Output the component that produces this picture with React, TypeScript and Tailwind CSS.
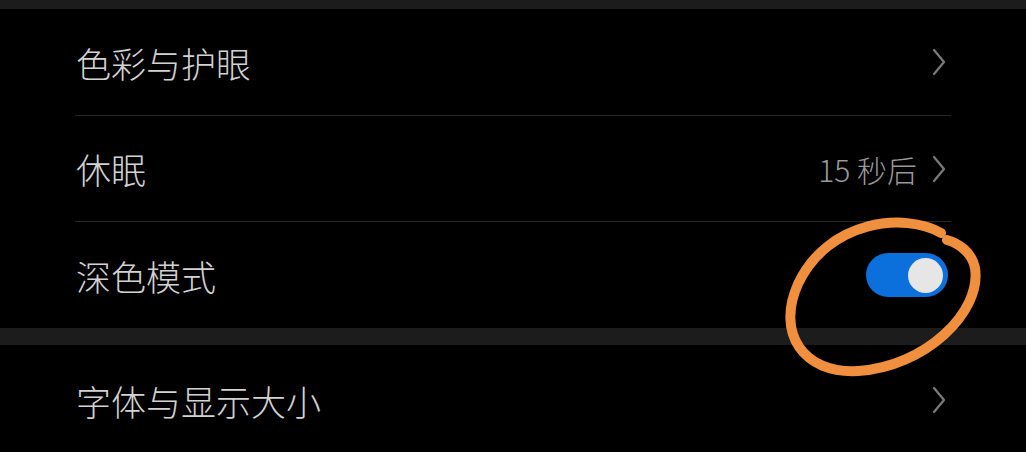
import type { ReactNode } from "react";

function Chevron() {
  return (
    <svg width="16" height="28" viewBox="0 0 16 28" className="shrink-0">
      <path d="M3 2 L13 14 L3 26" fill="none" stroke="#7a7a7a" strokeWidth="2.2" strokeLinecap="round" strokeLinejoin="round" />
    </svg>
  );
}

function Row({ label, right, divider = true, height = "h-[106px]" }: { label: string; right: ReactNode; divider?: boolean; height?: string }) {
  return (
    <div className={`mx-[75px] flex ${height} items-center justify-between ${divider ? "border-b border-[#262626]" : ""}`}>
      <span className="pl-[1px] text-[35px] font-light leading-none text-[#d2d2d2]">{label}</span>
      <div className="flex items-center gap-[14px] pr-[4px]">{right}</div>
    </div>
  );
}

export default function App() {
  return (
    <div
      className="relative h-[452px] w-[1026px] overflow-hidden bg-black"
      style={{ fontFamily: '"Noto Sans CJK SC", "Noto Sans", sans-serif' }}
    >
      <div className="h-[9px] bg-[#1c1c1c]" />
      <Row label="色彩与护眼" right={<Chevron />} height="h-[107px]" />
      <Row
        label="休眠"
        right={
          <>
            <span className="text-[30px] font-light leading-none text-[#999999]">15 秒后</span>
            <Chevron />
          </>
        }
      />
      <Row
        label="深色模式"
        divider={false}
        right={
          <div className="-mr-[1px] flex h-[44px] w-[82px] items-center justify-end rounded-full bg-[#0b6fdc] pr-[5px]">
            <div className="h-[35px] w-[35px] rounded-full bg-[#e6e6e6]" />
          </div>
        }
      />
      <div className="h-[17px] bg-[#1c1c1c]" />
      <Row label="字体与显示大小" right={<Chevron />} divider={false} height="h-[110px]" />

      <svg className="pointer-events-none absolute left-0 top-0" width="1026" height="452" viewBox="0 0 1026 452">
        <path
          d="M941 233 C 905 212, 828 220, 798 284 C 776 333, 803 374, 858 371 C 925 367, 982 312, 975 268 C 972 252, 958 243, 947 240"
          fill="none"
          stroke="#f0903f"
          strokeWidth="10"
          strokeLinecap="round"
        />
      </svg>
    </div>
  );
}
